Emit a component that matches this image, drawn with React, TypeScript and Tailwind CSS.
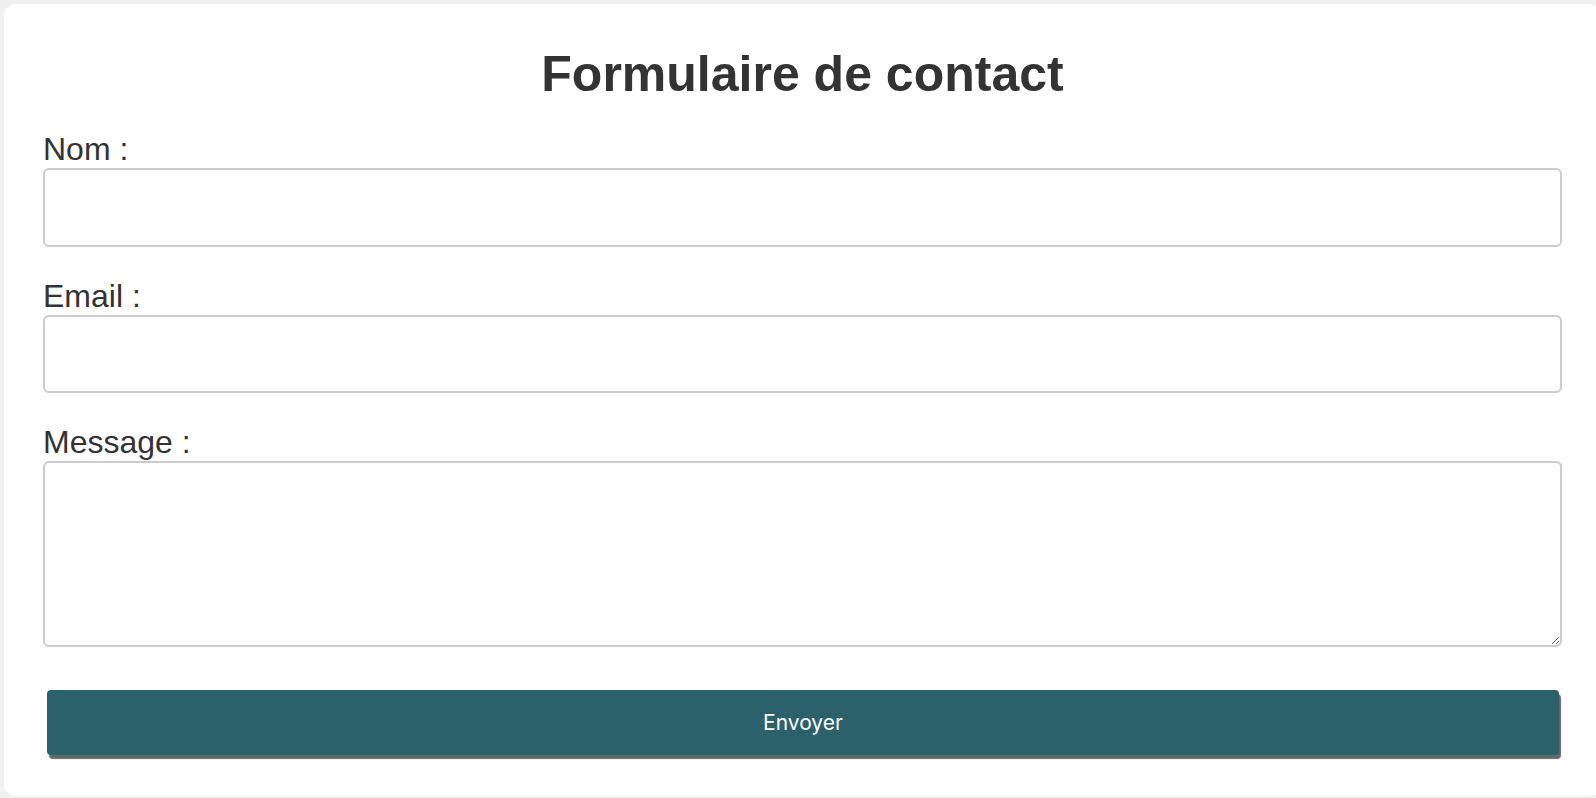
import React from 'react';

const labelCls =
  'block text-[32px] leading-none text-[#333] font-["Liberation_Sans",Arial,sans-serif]';
const fieldCls =
  'block w-full rounded-[6px] border-2 border-[#cccccc] bg-white px-3 text-[20px] outline-none';

export default function App() {
  return (
    <div className="h-[798px] w-full overflow-hidden bg-[#f0f0f0] pt-[4px] pl-[4px]">
      <div className="flex h-[792px] w-[1597px] flex-col rounded-xl bg-white px-[39px] pt-[45px]">
        <h1 className="text-center text-[50px] font-bold leading-none text-[#333] font-['Liberation_Sans',Arial,sans-serif]">
          Formulaire de contact
        </h1>

        <form className="flex flex-col" onSubmit={(e) => e.preventDefault()}>
          <label htmlFor="nom" className={`${labelCls} mt-[34px]`}>
            Nom :
          </label>
          <input id="nom" type="text" className={`${fieldCls} mt-[3px] h-[79px]`} />

          <label htmlFor="email" className={`${labelCls} mt-[33px]`}>
            Email :
          </label>
          <input id="email" type="email" className={`${fieldCls} mt-[3px] h-[78px]`} />

          <label htmlFor="message" className={`${labelCls} mt-[33px]`}>
            Message :
          </label>
          <textarea id="message" className={`${fieldCls} mt-[3px] h-[186px] py-2`} />

          <button
            type="submit"
            className="mt-[43px] ml-[4px] mr-[3px] h-[65px] rounded-[4px] bg-[#2b616b] text-[21px] text-white shadow-[2px_4px_1px_#666666] font-['Inter','Noto_Sans',sans-serif]"
          >
            Envoyer
          </button>
        </form>
      </div>
    </div>
  );
}
